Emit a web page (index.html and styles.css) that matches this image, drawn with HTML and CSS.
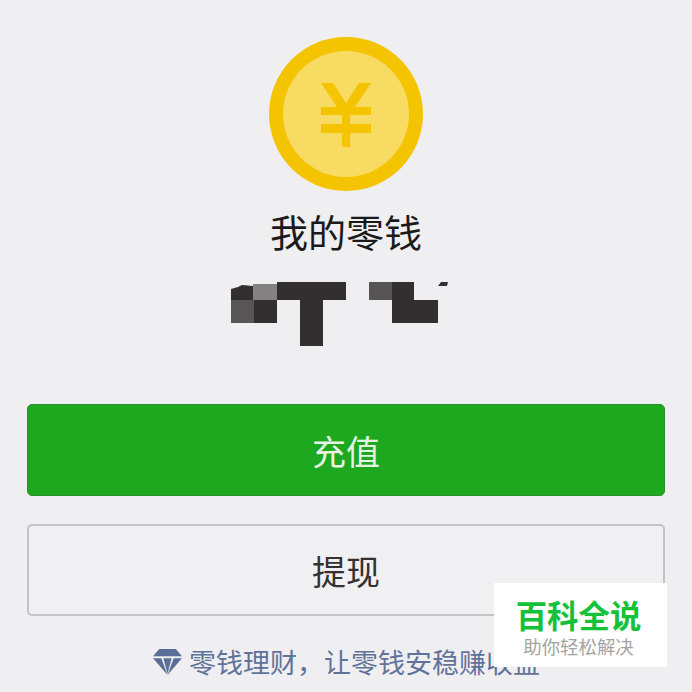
FILE: index.html
```html
<!DOCTYPE html>
<html lang="zh">
<head>
<meta charset="utf-8">
<title>我的零钱</title>
<link rel="stylesheet" href="styles.css">
</head>
<body>
<main class="page">
  <svg class="coin" width="154" height="154" viewBox="0 0 154 154" aria-hidden="true">
    <circle cx="77" cy="77" r="77" fill="#f5c400"/>
    <circle cx="77" cy="77" r="63" fill="#f8db62"/>
    <path d="M52 46h12l13 20 13-20h12L86 70h16v8H81v9h21v9H81v14H73V96H52v-9h21v-9H52v-8h16z" fill="#f5c400"/>
  </svg>
  <h1 class="title">我的零钱</h1>
  <svg class="mosaic" width="218" height="64" viewBox="0 0 218 64" aria-hidden="true">
    <path d="M1 7l7-2 4-2 11 1v14H1z" fill="#332f30"/>
    <rect x="23" y="2" width="24" height="16" fill="#838182"/>
    <rect x="47" y="0" width="69" height="18" fill="#332f30"/>
    <rect x="1" y="18" width="23" height="23" fill="#575556"/>
    <rect x="24" y="18" width="23" height="23" fill="#332f30"/>
    <rect x="70" y="18" width="23" height="46" fill="#332f30"/>
    <rect x="139" y="0" width="23" height="18" fill="#565455"/>
    <rect x="162" y="0" width="22" height="18" fill="#332f30"/>
    <rect x="162" y="18" width="46" height="23" fill="#332f30"/>
    <path d="M208 4l3-4h7l-1 4z" fill="#332f30"/>
  </svg>
  <button class="btn btn-primary" type="button">充值</button>
  <button class="btn btn-secondary" type="button">提现</button>
  <p class="finance">
    <svg class="gem" width="31" height="29" viewBox="0 0 30 28" aria-hidden="true">
      <path d="M7 1h16l6 7H1z" fill="#5b6e98"/>
      <path d="M1 10h8l6 16z" fill="#5b6e98"/>
      <path d="M11 10h8l-4 15z" fill="#5b6e98"/>
      <path d="M21 10h8L15 26z" fill="#5b6e98"/>
    </svg>
    <span>零钱理财，让零钱安稳赚收益</span>
  </p>
</main>
<aside class="watermark">
  <strong class="wm-title">百科全说</strong>
  <span class="wm-sub">助你轻松解决</span>
</aside>
</body>
</html>
```
FILE: styles.css
```css
html, body {
  margin: 0;
  height: 692px;
  overflow: hidden;
  background: #efeef0;
}
body {
  position: relative;
  font-family: "Noto Sans CJK SC", "Noto Sans", sans-serif;
}
.page {
  display: flex;
  flex-direction: column;
  align-items: center;
  padding: 37px 27px 0;
}
.coin { display: block; }
.title {
  margin: 13px 0 0;
  font-size: 38px;
  line-height: 54px;
  font-weight: 400;
  color: #1b1a1b;
}
.mosaic {
  display: block;
  margin: 24px 14px 0 0;
}
.btn {
  width: 638px;
  height: 92px;
  padding: 0;
  border-radius: 5px;
  font-family: inherit;
  font-size: 34px;
}
.btn-primary {
  margin-top: 58px;
  border: 1px solid #2b8f2a;
  background: #1ea81f;
  color: #e6f3e4;
}
.btn-secondary {
  margin-top: 28px;
  border: 2px solid #c3c2c5;
  background: #f0eff1;
  color: #333132;
}
.finance {
  display: flex;
  align-items: center;
  gap: 6px;
  margin: 26px 0 0;
  font-size: 27px;
  line-height: 40px;
  color: #5f7299;
}
.gem { display: block; }
.watermark {
  position: absolute;
  left: 494px;
  top: 583px;
  width: 169px;
  height: 84px;
  padding-right: 4px;
  display: flex;
  flex-direction: column;
  align-items: center;
  background: #fff;
}
.wm-title {
  margin-top: 14px;
  font-size: 31.4px;
  line-height: 36px;
  font-weight: 700;
  color: #14c23a;
}
.wm-sub {
  font-size: 18.4px;
  line-height: 26px;
  color: #a3a3a3;
}
```
